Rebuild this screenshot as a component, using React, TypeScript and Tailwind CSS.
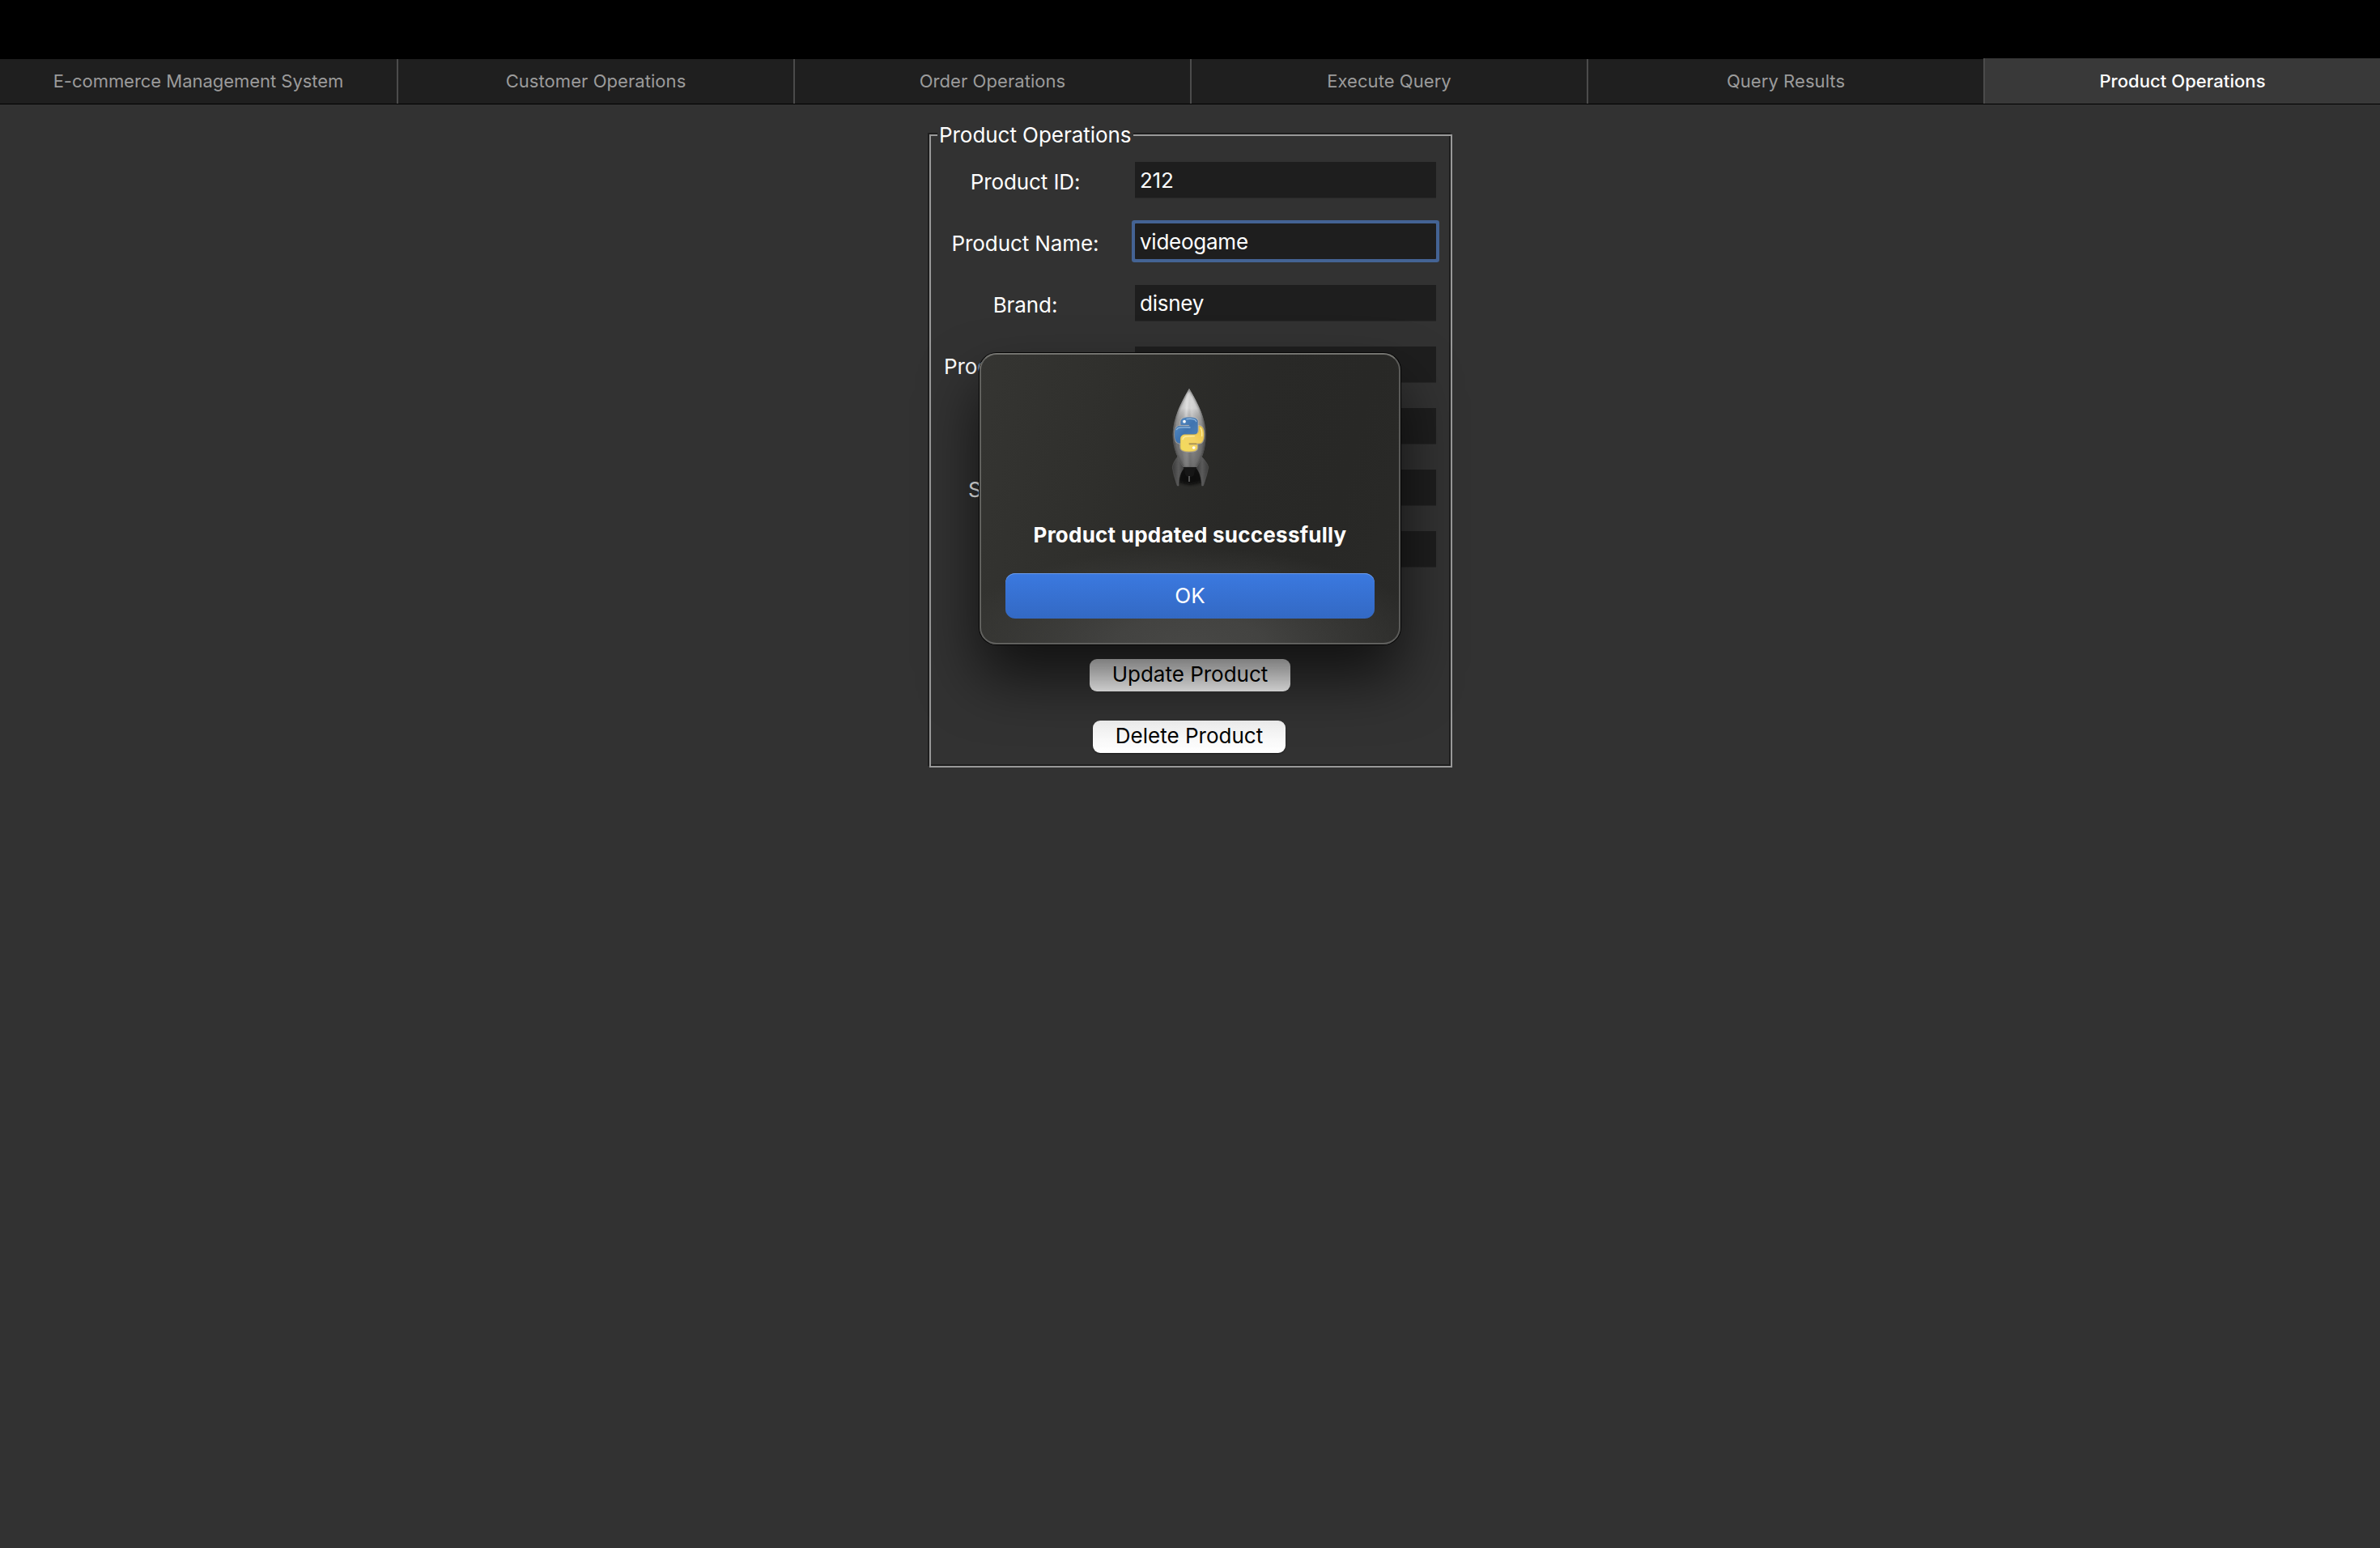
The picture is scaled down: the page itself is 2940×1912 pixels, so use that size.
import React from 'react';

const tabs = [
  'E-commerce Management System',
  'Customer Operations',
  'Order Operations',
  'Execute Query',
  'Query Results',
  'Product Operations',
];

type Field = { id: string; label: string; value: string; focused?: boolean; labelClass?: string };

const fields: Field[] = [
  { id: 'id', label: 'Product ID:', value: '212' },
  { id: 'name', label: 'Product Name:', value: 'videogame', focused: true },
  { id: 'brand', label: 'Brand:', value: 'disney' },
  { id: 'f4', label: 'Prod', value: '', labelClass: 'text-left pl-[9px]' },
  { id: 'f5', label: '', value: '' },
  { id: 'f6', label: 'S', value: '', labelClass: 'text-left pl-[39px]' },
  { id: 'f7', label: '', value: '' },
];

function TabBar() {
  return (
    <nav className="flex h-[57px] border-b border-black bg-black text-[22px]">
      {tabs.map((tab, i) => {
        const active = i === tabs.length - 1;
        return (
          <div
            key={tab}
            className={
              active
                ? 'w-[490px] bg-[#393939] font-medium tracking-[0.04px] text-white'
                : 'mt-px w-[490px] bg-[#1f1f1f] text-[#9b9b9b]'
            }
          >
            <div
              className={
                i === 0
                  ? 'flex h-full items-center justify-center tracking-[-0.03px]'
                  : 'flex h-full items-center justify-center border-l-2 border-[#4b4b4b] tracking-[0.06px]'
              }
            >
              {tab}
            </div>
          </div>
        );
      })}
    </nav>
  );
}

function FieldRow({ field }: { field: Field }) {
  return (
    <div className="flex h-[76px] items-start">
      <label
        className={
          'mt-[3px] ml-[3px] h-[44px] w-[219px] leading-[44px] tracking-[-0.1px] whitespace-nowrap ' +
          (field.labelClass ?? 'text-center')
        }
      >
        {field.label}
      </label>
      <div
        className={
          'ml-[26px] h-[44px] w-[372px] bg-[#1e1e1e] pl-[6px] leading-[46px] tracking-[-0.25px] ' +
          (field.focused
            ? 'rounded-[1px] shadow-[0_0_0_4px_#446394]'
            : 'shadow-[0_1px_0_#282828]')
        }
      >
        {field.value}
      </div>
    </div>
  );
}

function RocketIcon() {
  return (
    <svg viewBox="0 0 420 480" className="h-[160px] w-[140px]" aria-hidden="true">
      <defs>
        <linearGradient id="hull" x1="146" x2="269" y1="0" y2="0" gradientUnits="userSpaceOnUse">
          <stop offset="0" stopColor="#666" />
          <stop offset=".12" stopColor="#919191" />
          <stop offset=".3" stopColor="#a8a8a8" />
          <stop offset=".42" stopColor="#c2c2c2" />
          <stop offset=".52" stopColor="#ababab" />
          <stop offset=".62" stopColor="#b9b9b9" />
          <stop offset=".85" stopColor="#939393" />
          <stop offset="1" stopColor="#5c5c5c" />
        </linearGradient>
        <linearGradient id="hullShade" x1="0" x2="0" y1="60" y2="350" gradientUnits="userSpaceOnUse">
          <stop offset="0" stopColor="#fff" stopOpacity=".35" />
          <stop offset=".25" stopColor="#fff" stopOpacity=".38" />
          <stop offset=".42" stopColor="#888" stopOpacity=".1" />
          <stop offset=".7" stopColor="#333" stopOpacity=".36" />
          <stop offset="1" stopColor="#222" stopOpacity=".5" />
        </linearGradient>
        <linearGradient id="fin" x1="0" x2="1" y1="0" y2="0">
          <stop offset="0" stopColor="#3a3a3a" />
          <stop offset=".5" stopColor="#5a5a5a" />
          <stop offset="1" stopColor="#3c3c3c" />
        </linearGradient>
        <linearGradient id="snakeBlue" x1="0" x2="1" y1="0" y2="1">
          <stop offset="0" stopColor="#5a93cc" />
          <stop offset=".5" stopColor="#3f74b0" />
          <stop offset="1" stopColor="#5384b8" />
        </linearGradient>
        <linearGradient id="snakeYellow" x1="0" x2="1" y1="1" y2="0">
          <stop offset="0" stopColor="#f3dc5a" />
          <stop offset=".5" stopColor="#f3d366" />
          <stop offset="1" stopColor="#eac23e" />
        </linearGradient>
        <radialGradient id="ground">
          <stop offset="0" stopColor="#000" stopOpacity=".75" />
          <stop offset=".6" stopColor="#000" stopOpacity=".4" />
          <stop offset="1" stopColor="#000" stopOpacity="0" />
        </radialGradient>
        <filter id="soft" x="-20%" y="-20%" width="140%" height="140%">
          <feGaussianBlur stdDeviation="3" />
        </filter>
        <clipPath id="hullClip">
          <path d="M207 60C184 100 146 165 146 230C146 285 166 318 184 350H236C254 318 269 285 269 230C269 165 231 100 207 60Z" />
        </clipPath>
      </defs>
      <ellipse cx="211" cy="392" rx="66" ry="34" fill="url(#ground)" />
      <path d="M172 362L186 348H236L250 364L252 404L210 414L172 404Z" fill="#111" opacity=".85" filter="url(#soft)" />
      <path d="M166 310C153 326 146 340 145 352C149 378 155 400 163 420H168C168 392 174 368 190 352Z" fill="url(#fin)" stroke="#606060" strokeWidth="1.5" />
      <path d="M251 310C266 326 276 340 278 352C273 378 267 400 259 420H254C252 392 247 368 232 352Z" fill="url(#fin)" stroke="#606060" strokeWidth="1.5" />
      <path d="M184 349H236L228 364L224 382L218 386H198L192 376L190 364Z" fill="#161616" />
      <path d="M207 60C184 100 146 165 146 230C146 285 166 318 184 350H236C254 318 269 285 269 230C269 165 231 100 207 60Z" fill="url(#hull)" />
      <path d="M207 60C184 100 146 165 146 230C146 285 166 318 184 350H236C254 318 269 285 269 230C269 165 231 100 207 60Z" fill="url(#hullShade)" />
      <g clipPath="url(#hullClip)" filter="url(#soft)" fill="none">
        <path d="M205 80L194 165M212 90L216 165" stroke="#fff" strokeOpacity=".35" strokeWidth="5" />
        <path d="M198 295L203 348M188 295L194 348" stroke="#999" strokeOpacity=".5" strokeWidth="4" />
        <path d="M207 60C184 100 146 165 146 230C146 285 166 318 184 350M236 350C254 318 269 285 269 230C269 165 231 100 207 60" stroke="#333" strokeOpacity=".55" strokeWidth="6" />
      </g>
      <rect x="205" y="384" width="4" height="21" fill="#777" />
      <g stroke="#cfcfcf" strokeOpacity=".45" strokeWidth="7" strokeLinejoin="round" fill="none">
        <path d="M207 167C186 167 176 172 176 183V194H208V199H172C158 199 154 212 154 230C154 252 160 262 174 262V247C175 237 182 231 193 231H224C234 231 238 224 238 215V181C238 171 226 167 207 167Z" />
        <path d="M243 198C256 199 261 210 261 230C261 252 255 263 243 263H207V268H237V280C237 290 226 293 206 293C184 293 175 288 175 277V247C175 236 182 230 193 230H225C237 230 243 223 243 213Z" />
      </g>
      <path d="M207 167C186 167 176 172 176 183V194H208V199H172C158 199 154 212 154 230C154 252 160 262 174 262V247C175 237 182 231 193 231H224C234 231 238 224 238 215V181C238 171 226 167 207 167Z" fill="url(#snakeBlue)" stroke="#3b6aa0" strokeWidth="1.5" />
      <path d="M243 198C256 199 261 210 261 230C261 252 255 263 243 263H207V268H237V280C237 290 226 293 206 293C184 293 175 288 175 277V247C175 236 182 230 193 230H225C237 230 243 223 243 213Z" fill="url(#snakeYellow)" stroke="#d9b23a" strokeWidth="1.5" />
      <path d="M198 173C212 170 232 172 233 182M160 212C164 203 172 203 210 204" fill="none" stroke="#a9cbe8" strokeOpacity=".75" strokeWidth="4" strokeLinecap="round" />
      <path d="M183 248C185 238 190 236 226 236M249 206C255 212 255 222 254 236" fill="none" stroke="#fff3b0" strokeOpacity=".85" strokeWidth="4" strokeLinecap="round" />
      <path d="M206 264H234" stroke="#a98a3a" strokeWidth="3" />
      <circle cx="189" cy="182" r="5.5" fill="#fff" />
      <circle cx="224" cy="279" r="5.5" fill="#fff" />
    </svg>
  );
}

function Dialog() {
  return (
    <div
      role="alertdialog"
      className="absolute top-[272px] left-[64px] flex h-[360px] w-[520px] flex-col items-center rounded-[21px] border-2 border-t-[#73736f] border-r-[#5b5b59] border-b-[#60605e] border-l-[#61615e] bg-[radial-gradient(ellipse_300px_120px_at_50%_100%,#474745_0%,#434341_30%,#3a3a3800_100%),linear-gradient(105deg,#353532_0%,#2f2f2c_30%,#292927_58%,#282826_80%,#2a2a28_100%)] bg-origin-border shadow-[0_0_0_1px_#050505,0_40px_72px_rgba(0,0,0,0.65)]"
    >
      <div className="mt-[22px] h-[160px]">
        <RocketIcon />
      </div>
      <p className="mt-[21px] h-[40px] text-[26px] leading-[40px] font-bold tracking-[0.24px]">
        Product updated successfully
      </p>
      <button className="mt-[27px] h-[56px] w-[456px] rounded-[12px] bg-linear-to-b from-[#3b79e0] to-[#3369c4] pb-[2px] text-center text-[26px] text-white shadow-[inset_0_1px_0_#6a9bec]">
        OK
      </button>
    </div>
  );
}

export default function App() {
  return (
    <div className="h-[1912px] w-[2940px] overflow-hidden bg-[#323232] font-['Inter',sans-serif] text-white">
      <div className="h-[72px] bg-black" />
      <TabBar />
      <main className="flex justify-center pt-[35px] text-[26px]">
        <section className="relative h-[784px] w-[648px]">
          <div className="h-[782px] w-[646px] border-2 border-[#1e1e1e]">
            <div className="h-[782px] w-[646px] border-2 border-[#999]">
              <h2 className="-mt-[10px] ml-[8px] h-[20px] w-[242px] bg-[#323232] pl-[2px] leading-[18px] whitespace-nowrap tracking-[-0.05px]">
                Product Operations
              </h2>
              <form className="mt-[22px] ml-[4px]">
                {fields.map((f) => (
                  <FieldRow key={f.id} field={f} />
                ))}
              </form>
              <div className="mt-[82px] flex flex-col items-center gap-[36px] pr-[2px] text-black">
                <div className="h-[40px] w-[248px] rounded-[9px] bg-linear-to-b from-[#f2f2f2] to-white text-center leading-[37px]">
                  Update Product
                </div>
                <div className="-ml-[2px] h-[40px] w-[238px] rounded-[9px] bg-linear-to-b from-[#f2f2f2] to-white text-center leading-[37px] shadow-[0_1px_2px_rgba(0,0,0,0.4)]">
                  Delete Product
                </div>
              </div>
            </div>
          </div>
          <Dialog />
        </section>
      </main>
    </div>
  );
}
